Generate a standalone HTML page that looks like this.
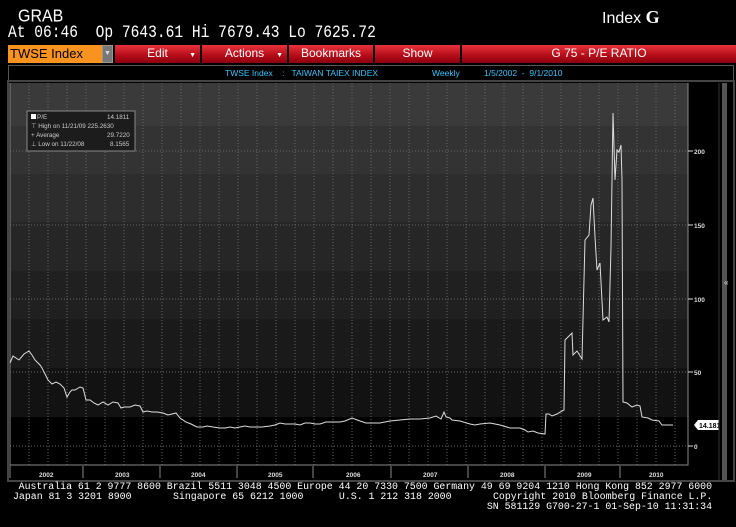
<!DOCTYPE html>
<html><head><meta charset="utf-8"><style>
body{margin:0;width:736px;height:527px;background:#000;overflow:hidden;position:relative;font-family:"Liberation Sans",sans-serif;color:#fff}
.a{position:absolute;white-space:pre}
.m{font-family:"Liberation Mono",monospace}
.btn{position:absolute;top:45px;height:18px;background:linear-gradient(#e8323a,#b30c18 60%,#8c0010);color:#fff;font-size:12px;text-align:center;line-height:16px}
</style></head><body>
<div class="a" style="left:18px;top:7px;font-size:16px;transform:scaleY(1.1);transform-origin:0 0">GRAB</div>
<div class="a" style="left:602px;top:7px;font-size:16px;">Index <b style="font-family:'Liberation Serif',serif;font-size:18px">G</b></div>
<div class="a m" style="left:8px;top:24px;font-size:14.6px;transform:scaleY(1.2);transform-origin:0 0">At 06:46  Op 7643.61 Hi 7679.43 Lo 7625.72</div>
<div class="a" style="left:8px;top:45px;width:94px;height:18px;background:#f7931e;color:#000;font-size:13px;line-height:18px;padding-left:2px;box-sizing:border-box">TWSE Index</div>
<div class="a" style="left:102px;top:45px;width:11px;height:18px;background:#777;border:1px solid #999;box-sizing:border-box;color:#ddd;font-size:7px;text-align:center;line-height:16px">▼</div>
<div class="btn" style="left:115px;width:85px">Edit<span style="position:absolute;right:4px;top:3px;font-size:7px">▼</span></div>
<div class="btn" style="left:202px;width:85px">Actions<span style="position:absolute;right:4px;top:3px;font-size:7px">▼</span></div>
<div class="btn" style="left:289px;width:84px">Bookmarks</div>
<div class="btn" style="left:375px;width:85px">Show</div>
<div class="btn" style="left:462px;width:274px;">G 75 - P/E RATIO</div>
<div class="a" style="left:8px;top:65px;width:726px;height:16px;border:1px solid #555;box-sizing:border-box"></div>
<div class="a" style="left:225px;top:68px;font-size:8.5px;color:#2fc6ff">TWSE Index    :   TAIWAN TAIEX INDEX</div>
<div class="a" style="left:432px;top:68px;font-size:8.5px;color:#2fc6ff">Weekly</div>
<div class="a" style="left:484px;top:68px;font-size:8.5px;color:#2fc6ff">1/5/2002  -  9/1/2010</div>
<svg class="a" style="left:0;top:80px" width="736" height="405" viewBox="0 80 736 405">
<rect x="8" y="81" width="726" height="400" fill="#000" stroke="#444" stroke-width="2"/>
<rect x="10" y="83" width="678" height="43" fill="#3a3a3a"/>
<rect x="10" y="126" width="678" height="48" fill="#333"/>
<rect x="10" y="174" width="678" height="48" fill="#2d2d2d"/>
<rect x="10" y="222" width="678" height="49" fill="#262626"/>
<rect x="10" y="271" width="678" height="48" fill="#202020"/>
<rect x="10" y="319" width="678" height="49" fill="#1a1a1a"/>
<rect x="10" y="368" width="678" height="49" fill="#121212"/>
<g stroke="#666" stroke-width="1" stroke-dasharray="1,2">
<path d="M10 151H688M10 225H688M10 299H688M10 372H688M10 446H688"/>
<path d="M29 83V465M48 83V465M67 83V465M86 83V465M105 83V465M124 83V465M143 83V465M162 83V465M181 83V465M200 83V465M219 83V465M238 83V465M257 83V465M276 83V465M295 83V465M314 83V465M333 83V465M352 83V465M371 83V465M390 83V465M409 83V465M428 83V465M447 83V465M466 83V465M485 83V465M504 83V465M523 83V465M542 83V465M561 83V465M580 83V465M599 83V465M618 83V465M637 83V465M656 83V465M675 83V465"/>
</g>
<path d="M10 465H688V83M10 83V478M83 466V478M160 466V478M237 466V478M313 466V478M391 466V478M468 466V478M545 466V478M620 466V478" stroke="#888" fill="none"/>
<path d="M688 151h5M688 225h5M688 299h5M688 372h5M688 446h5" stroke="#ddd"/>
<g fill="#ddd" font-size="6.5" font-family="Liberation Sans,sans-serif" font-weight="bold">
<text x="694" y="154">200</text><text x="694" y="228">150</text><text x="694" y="302">100</text><text x="694" y="375">50</text><text x="694" y="449">0</text>
<text x="39" y="477">2002</text><text x="115" y="477">2003</text><text x="191" y="477">2004</text><text x="268" y="477">2005</text><text x="346" y="477">2006</text><text x="423" y="477">2007</text><text x="500" y="477">2008</text><text x="577" y="477">2009</text><text x="649" y="477">2010</text>
</g>
<polyline fill="none" stroke="#ddd" stroke-width="1" points="10,363 13,356 16,358 19,360 24,354 29,351 32,355 35,360 40,365 42,368 45,374 48,380 52,384 56,382 60,384 64,388 67,397 70,392 72,390 75,390 80,387 83,388 86,400 90,400 94,403 98,405 103,402 108,405 113,402 118,403 121,408 124,407 130,407 135,405 140,406 143,412 147,411 152,412 157,412 163,413 168,415 172,414 176,413 180,418 186,422 191,424 197,427 203,427 207,426 213,427 220,428 225,428 230,427 235,428 240,427 245,426 250,427 255,427 262,427 270,426 275,425 280,423 285,424 295,424 300,425 305,423 310,423 315,424 320,424 326,422 340,422 345,421 352,418 360,421 366,423 380,423 390,421 400,420 410,419 420,419 430,418 436,416 441,419 444,412 446,417 450,418 452,420 460,421 470,424 475,425 480,424 490,423 500,425 510,428 520,428 525,430 528,432 533,431 538,433 545,434 546,414 549,414 552,416 557,414 562,411 564,410 565,340 572,333 573,355 577,351 582,359 585,240 589,235 591,205 593,198 595,237 597,270 600,263 603,320 607,317 609,322 611,247 613,113 615,180 617,150 619,152 621,145 622,180 623,402 627,403 632,407 637,405 640,406 642,417 648,418 652,420 659,421 662,425 673,425"/>
<path d="M694 425l4-5h21v10h-21z" fill="#fff"/>
<text x="699" y="428" font-size="7" fill="#000" font-weight="bold" font-family="Liberation Sans,sans-serif">14.1811</text>
<rect x="27" y="111" width="108" height="40" fill="#1c1c1c" stroke="#888"/>
<rect x="31" y="114" width="5" height="5" fill="#fff"/>
<g fill="#ccc" font-size="6.3" font-family="Liberation Sans,sans-serif">
<text x="37" y="119">P/E</text><text x="107" y="119">14.1811</text>
<text x="31" y="128">⊤ High on 11/21/09  225.2630</text>
<text x="31" y="137">+ Average</text><text x="107" y="137">29.7220</text>
<text x="31" y="146">⊥ Low on 11/22/08</text><text x="110" y="146">8.1565</text>
</g>
<line x1="719" y1="83" x2="719" y2="480" stroke="#333"/>
<rect x="722" y="83" width="5" height="397" fill="#555"/>
<text x="724" y="285" font-size="8" fill="#ddd">«</text>
</svg>
<div class="a m" style="left:13px;top:482px;width:699px;font-size:9.9px;line-height:10px;text-align:right">Australia 61 2 9777 8600 Brazil 5511 3048 4500 Europe 44 20 7330 7500 Germany 49 69 9204 1210 Hong Kong 852 2977 6000
Japan 81 3 3201 8900       Singapore 65 6212 1000      U.S. 1 212 318 2000       Copyright 2010 Bloomberg Finance L.P.
SN 581129 G700-27-1 01-Sep-10 11:31:34</div>
</body></html>
